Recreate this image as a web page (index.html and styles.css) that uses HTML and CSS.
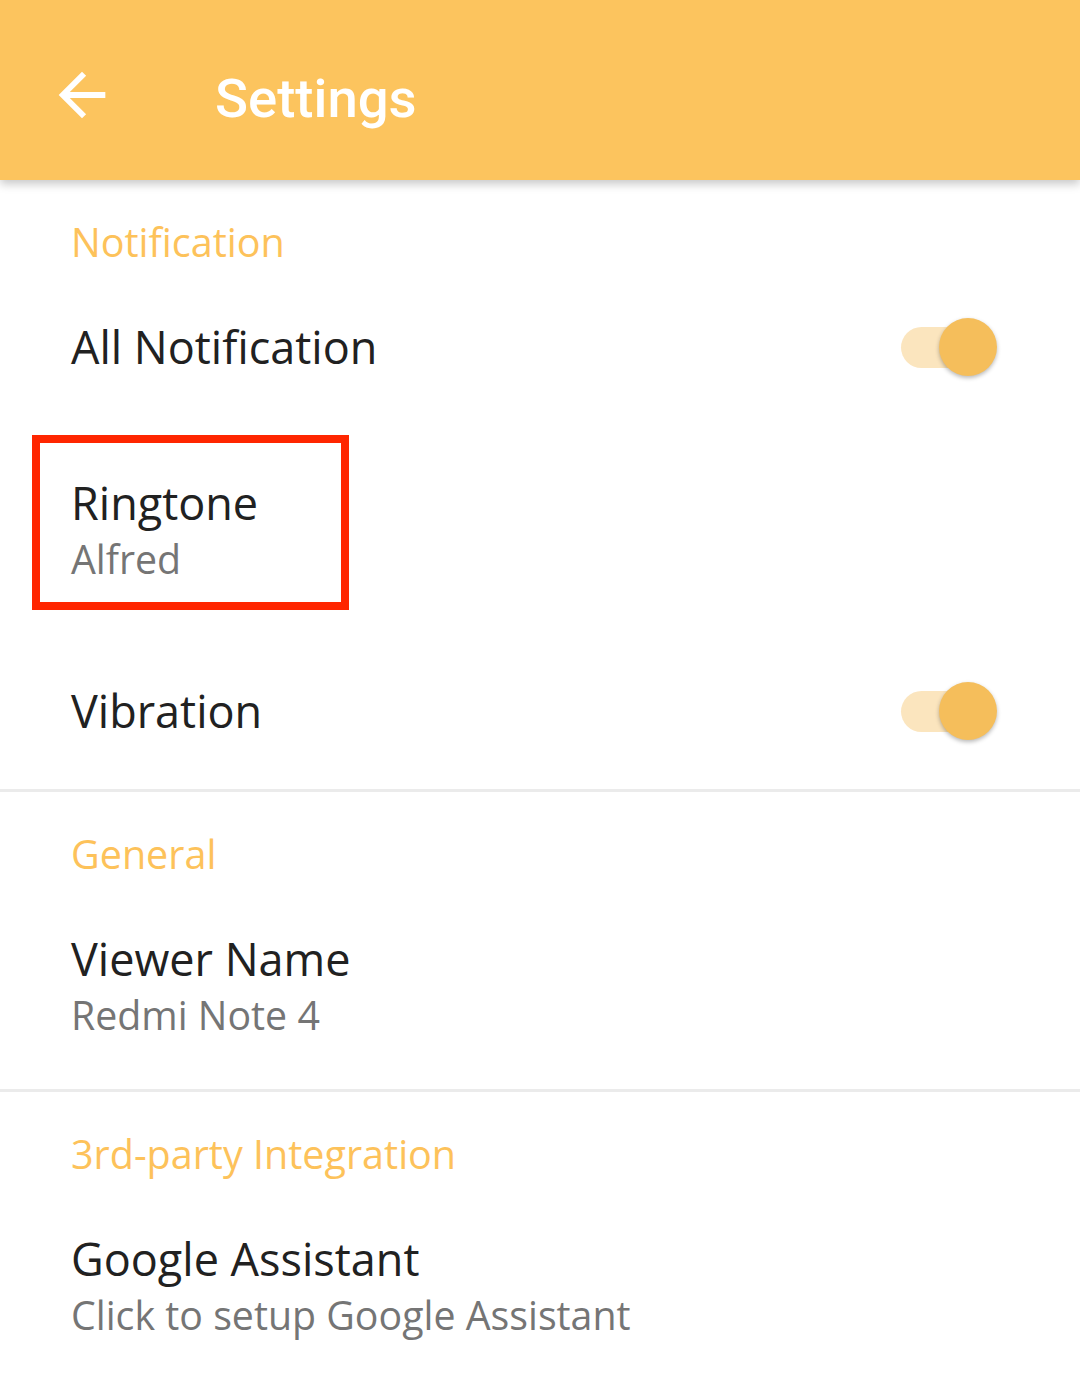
FILE: index.html
```html
<!DOCTYPE html>
<html>
<head>
<meta charset="utf-8">
<link rel="stylesheet" href="styles.css">
</head>
<body>
<header class="appbar">
  <svg class="back" viewBox="0 0 24 24" width="70" height="70"><path d="M20 11H7.83l5.59-5.59L12 4l-8 8 8 8 1.41-1.41L7.83 13H20v-2z" fill="#ffffff"/></svg>
  <div class="title">Settings</div>
</header>
<main class="list">
  <section class="group">
    <div class="category">Notification</div>
    <div class="row">
      <div class="texts"><div class="primary">All Notification</div></div>
      <div class="switch"><span class="track"></span><span class="thumb"></span></div>
    </div>
    <div class="row marked">
      <div class="texts"><div class="primary">Ringtone</div><div class="secondary">Alfred</div></div>
      <div class="highlight"></div>
    </div>
    <div class="row">
      <div class="texts"><div class="primary">Vibration</div></div>
      <div class="switch"><span class="track"></span><span class="thumb"></span></div>
    </div>
  </section>
  <section class="group">
    <div class="category">General</div>
    <div class="row">
      <div class="texts"><div class="primary">Viewer Name</div><div class="secondary">Redmi Note 4</div></div>
    </div>
  </section>
  <section class="group last">
    <div class="category">3rd-party Integration</div>
    <div class="row">
      <div class="texts"><div class="primary">Google Assistant</div><div class="secondary">Click to setup Google Assistant</div></div>
    </div>
  </section>
</main>
</body>
</html>
```
FILE: styles.css
```css
html, body {
  margin: 0;
  padding: 0;
  background: #ffffff;
}
body {
  font-family: "Open Sans", "Noto Sans", sans-serif;
  width: 1080px;
  height: 1381px;
  overflow: hidden;
}
.appbar {
  position: relative;
  z-index: 2;
  height: 180px;
  box-sizing: border-box;
  padding: 10px 0 0 47px;
  display: flex;
  align-items: center;
  background: #fcc45e;
  box-shadow: 0 4px 9px rgba(0, 0, 0, 0.22);
}
.back {
  display: block;
  flex: none;
}
.title {
  margin-left: 98px;
  padding-top: 5px;
  font-family: Roboto, "Noto Sans", sans-serif;
  font-weight: 500;
  font-size: 54.5px;
  line-height: 64px;
  color: #ffffff;
}
.list {
  position: relative;
  z-index: 1;
}
.group {
  border-bottom: 3px solid #ebebeb;
}
.group.last {
  border-bottom: none;
}
.category {
  padding: 35px 0 0 71px;
  font-size: 39.5px;
  line-height: 54px;
  color: #fdc25a;
}
.row {
  position: relative;
  display: flex;
  align-items: center;
  justify-content: space-between;
  padding: 48px 83px 48px 71px;
}
.primary {
  font-size: 45px;
  line-height: 60px;
  color: #212121;
}
.secondary {
  font-size: 39.3px;
  line-height: 52px;
  color: #757575;
}
.switch {
  position: relative;
  width: 96px;
  height: 58px;
  flex: none;
}
.track {
  position: absolute;
  left: 0;
  top: 8.5px;
  width: 94px;
  height: 41px;
  border-radius: 21px;
  background: #fbe5be;
}
.thumb {
  position: absolute;
  right: 0;
  top: 0;
  width: 58px;
  height: 58px;
  border-radius: 50%;
  background: #f5be5b;
  box-shadow: 0 2px 4px rgba(0, 0, 0, 0.28);
}
.highlight {
  position: absolute;
  left: 32px;
  top: 10px;
  width: 317px;
  height: 175px;
  box-sizing: border-box;
  border: 8px solid #ff2600;
}
```
